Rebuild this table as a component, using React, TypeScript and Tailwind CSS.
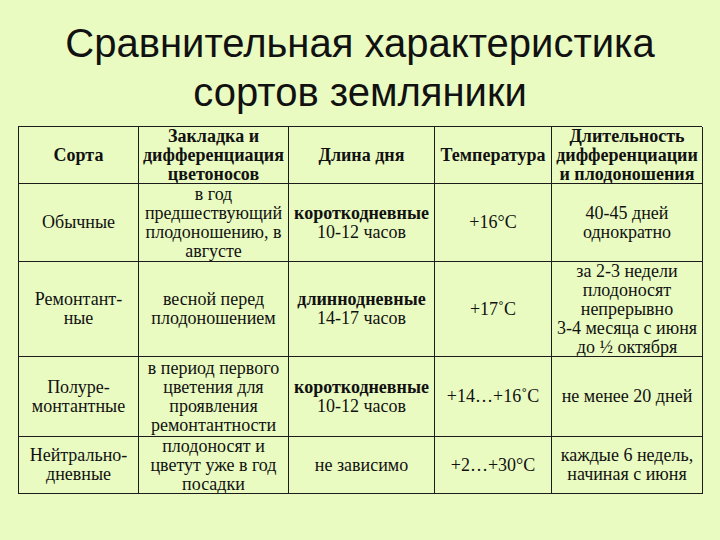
const rows: { cells: React.ReactNode[] }[] = [
  {
    cells: [
      "Обычные",
      <>в год<br />предшествующий<br />плодоношению, в<br />августе</>,
      <><b>короткодневные</b><br />10-12 часов</>,
      "+16°С",
      <>40-45 дней<br />однократно</>,
    ],
  },
  {
    cells: [
      <>Ремонтант-<br />ные</>,
      <>весной перед<br />плодоношением</>,
      <><b>длиннодневные</b><br />14-17 часов</>,
      "+17˚С",
      <>за 2-3 недели<br />плодоносят<br />непрерывно<br />3-4 месяца с июня<br />до ½ октября</>,
    ],
  },
  {
    cells: [
      <>Полуре-<br />монтантные</>,
      <>в период первого<br />цветения для<br />проявления<br />ремонтантности</>,
      <><b>короткодневные</b><br />10-12 часов</>,
      "+14…+16˚С",
      "не менее 20 дней",
    ],
  },
  {
    cells: [
      <>Нейтрально-<br />дневные</>,
      <>плодоносят и<br />цветут уже в год<br />посадки</>,
      "не зависимо",
      "+2…+30°С",
      <>каждые 6 недель,<br />начиная с июня</>,
    ],
  },
];

const head: React.ReactNode[] = [
  "Сорта",
  <>Закладка и<br />дифференциация<br />цветоносов</>,
  "Длина дня",
  "Температура",
  <>Длительность<br />дифференциации<br />и плодоношения</>,
];

function Cell({ children, bold }: { children: React.ReactNode; bold?: boolean }) {
  return (
    <div
      className={
        "flex items-center justify-center overflow-visible whitespace-nowrap border-r border-b border-[#1c1c1c] text-center leading-[19px] " +
        (bold ? "font-bold" : "")
      }
    >
      <div>{children}</div>
    </div>
  );
}

export default function App() {
  return (
    <div className="h-[540px] w-[720px] overflow-hidden bg-[#e9fbc1] text-[#111]">
      <h1 className="pt-[19px] text-center font-['Liberation_Sans'] text-[40px] leading-[49px] font-normal">
        Сравнительная характеристика
        <br />
        сортов земляники
      </h1>
      <div className="mx-[18px] mt-[9px] grid w-[684px] grid-cols-[120px_150px_146px_117px_151px] grid-rows-[57px_78px_95px_80px_57px] border-t border-l border-[#1c1c1c] font-['Liberation_Serif'] text-[18px]">
        {head.map((h, i) => (
          <Cell key={"h" + i} bold>
            {h}
          </Cell>
        ))}
        {rows.map((r, ri) =>
          r.cells.map((c, ci) => <Cell key={ri + "-" + ci}>{c}</Cell>)
        )}
      </div>
    </div>
  );
}
